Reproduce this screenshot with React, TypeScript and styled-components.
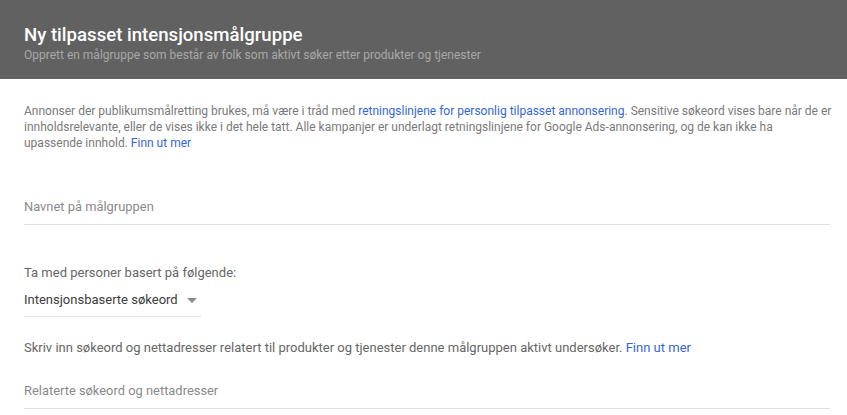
import React from 'react';
import styled, {createGlobalStyle} from "styled-components";

const GlobalStyle = createGlobalStyle`
    html, body {
        margin: 0;
        padding: 0;
        background: #ffffff;
        font-family: Roboto, "Noto Sans", Arial, sans-serif;
    }
`

const Header = styled.header`
    background-color: #616161;
    height: 79px;
    padding: 23px 24px 0;
    box-sizing: border-box;
`
const Title = styled.h1`
    margin: 0;
    font-size: 18.6px;
    font-weight: 500;
    line-height: 24px;
    color: #ffffff;
`
const Subtitle = styled.div`
    margin-top: 1px;
    font-size: 12px;
    line-height: 14px;
    color: #a8a8a8;
`
const Body = styled.main`
    padding: 24px 17px 0 24px;
    display: flex;
    flex-direction: column;
`
const Intro = styled.p`
    margin: 0 -4px 0 0;
    font-size: 12px;
    line-height: 16px;
    color: #7a7a7a;
`
const Link = styled.a`
    color: #3367d6;
    text-decoration: none;
`
const Field = styled.div<{ $width?: string; $top: string; $pad: string }>`
    margin-top: ${props => props.$top};
    width: ${props => props.$width || '100%'};
    border-bottom: 1px solid #e0e0e0;
    padding-bottom: ${props => props.$pad};
    display: flex;
    align-items: center;
`
const Placeholder = styled.span`
    font-size: 12.9px;
    line-height: 16px;
    color: #8a8a8a;
`
const Label = styled.div<{ $top: string }>`
    margin-top: ${props => props.$top};
    font-size: 13px;
    line-height: 16px;
    color: #666666;
`
const SelectValue = styled.span`
    font-size: 13px;
    line-height: 16px;
    color: #3c3c3c;
`
const Arrow = styled.span`
    margin-left: 9px;
    width: 0;
    height: 0;
    border-left: 5px solid transparent;
    border-right: 5px solid transparent;
    border-top: 5px solid #8a8a8a;
`

export default function App() {
    return (
        <>
            <GlobalStyle/>
            <Header>
                <Title>Ny tilpasset intensjonsmålgruppe</Title>
                <Subtitle>Opprett en målgruppe som består av folk som aktivt søker etter produkter og tjenester</Subtitle>
            </Header>
            <Body>
                <Intro>
                    Annonser der publikumsmålretting brukes, må være i tråd med{' '}
                    <Link href="#">retningslinjene for personlig tilpasset annonsering</Link>. Sensitive søkeord vises
                    bare når de er innholdsrelevante, eller de vises ikke i det hele tatt. Alle kampanjer er underlagt
                    retningslinjene for Google Ads-annonsering, og de kan ikke ha upassende innhold.{' '}
                    <Link href="#">Finn ut mer</Link>
                </Intro>

                <Field $top="48px" $pad="9px">
                    <Placeholder>Navnet på målgruppen</Placeholder>
                </Field>

                <Label $top="40px">Ta med personer basert på følgende:</Label>
                <Field $top="11px" $pad="8px" $width="177px">
                    <SelectValue>Intensjonsbaserte søkeord</SelectValue>
                    <Arrow/>
                </Field>

                <Label $top="23px">
                    Skriv inn søkeord og nettadresser relatert til produkter og tjenester denne målgruppen aktivt
                    undersøker. <Link href="#">Finn ut mer</Link>
                </Label>
                <Field $top="27px" $pad="9px">
                    <Placeholder>Relaterte søkeord og nettadresser</Placeholder>
                </Field>
            </Body>
        </>
    );
}
